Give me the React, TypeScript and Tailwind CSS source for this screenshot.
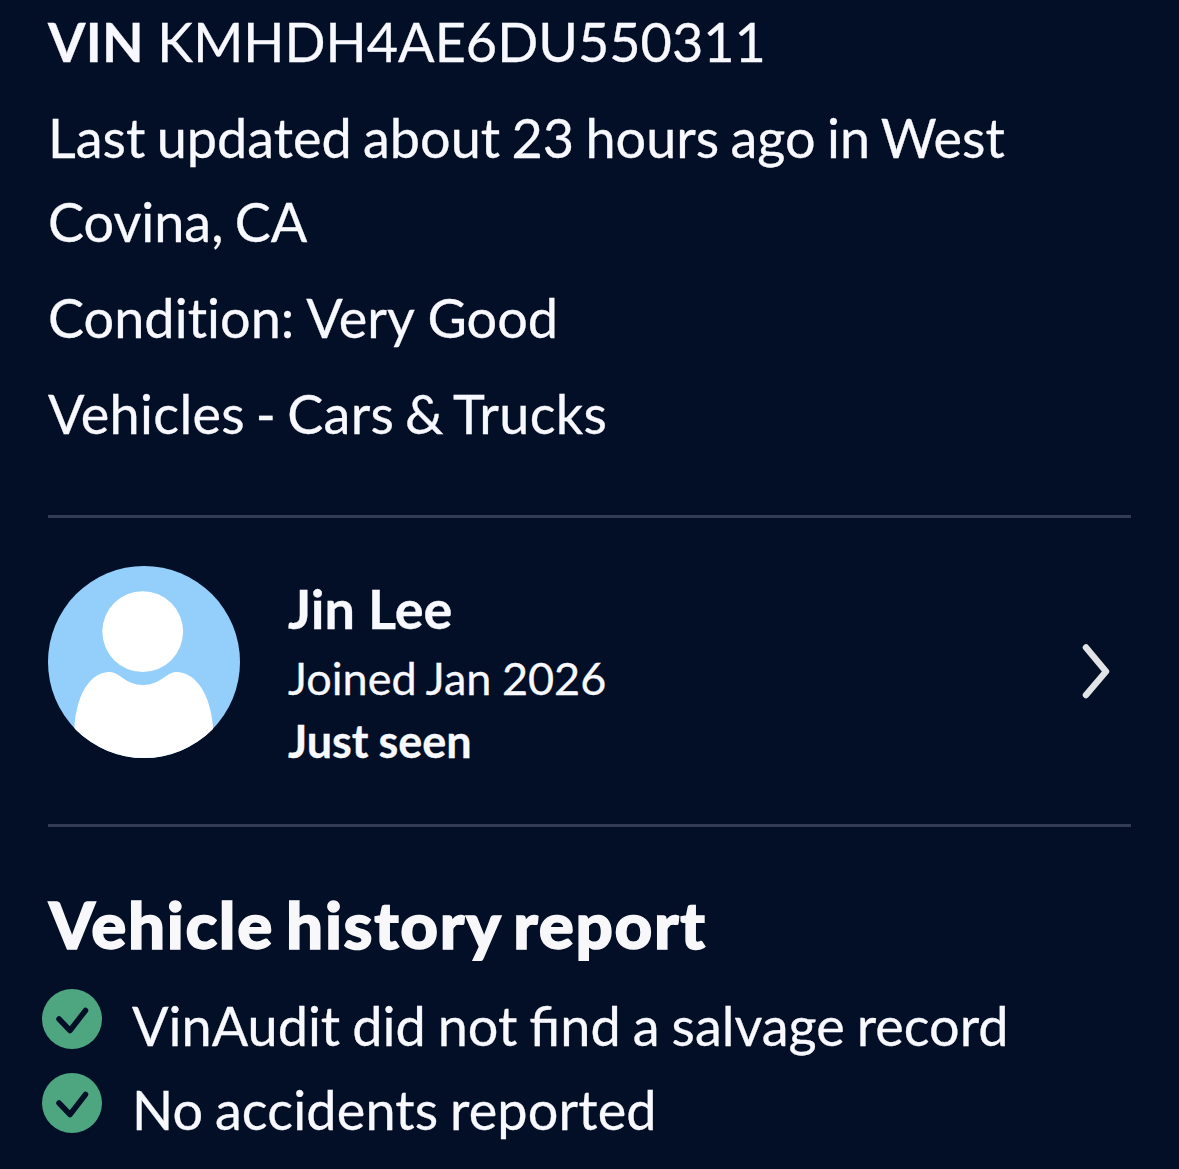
const details = [
  { text: "Condition: Very Good", className: "tracking-[0.03px] [font-variant-ligatures:none]" },
  { text: "Vehicles - Cars & Trucks", className: "tracking-[0.3px] [word-spacing:-3.2px]" },
];

const checks = [
  { text: "VinAudit did not find a salvage record", className: "[word-spacing:-1.8px]" },
  { text: "No accidents reported", className: "tracking-[0.15px] [word-spacing:-2.4px]" },
];

function Avatar() {
  return (
    <svg viewBox="0 0 192 192" className="size-48 shrink-0 rounded-full">
      <rect width="192" height="192" fill="#94cffc" />
      <circle cx="94.7" cy="65.6" r="40.4" fill="#fff" />
      <path
        d="M26.5 192V160C29 128 42 106 62 106C71 106 78 119 95 119C112 119 119 106 128 106C148 106 162 128 165 160V192Z"
        fill="#fff"
      />
    </svg>
  );
}

function CheckBadge() {
  return (
    <svg viewBox="0 0 60 60" className="mt-[5px] size-[60px] shrink-0" fill="none">
      <circle cx="30" cy="30" r="30" fill="#4da680" />
      <path
        d="M17 30L28 41.5L43.5 21.5"
        stroke="#020f26"
        strokeWidth="5.5"
        strokeLinecap="round"
        strokeLinejoin="round"
      />
    </svg>
  );
}

export default function App() {
  return (
    <main className="h-[1169px] overflow-hidden bg-[#020f26] px-12 font-['Lato',sans-serif] text-[54px] leading-[84px] text-[#f8f9ff] [-webkit-text-stroke:0.3px]">
      <section className="flex flex-col gap-3">
        <p className="[word-spacing:-0.5px]">
          <b className="tracking-[0.3px]">VIN</b> KMHDH4AE6DU550311
        </p>
        <p className="[word-spacing:-2.5px]">
          Last updated about 23 hours ago in West
          <br />
          Covina, CA
        </p>
        {details.map(({ text, className }) => (
          <p key={text} className={className}>
            {text}
          </p>
        ))}
      </section>

      <section className="mt-[59px] flex h-[312px] items-start border-y-[3px] border-[#323c54] pt-12">
        <Avatar />
        <div className="ml-12 flex-1">
          <h2 className="mt-px text-[54px] leading-[84px] font-bold">Jin Lee</h2>
          <p className="-mt-1 text-[45px] leading-[63px] [word-spacing:-1px]">Joined Jan 2026</p>
          <p className="text-[45px] leading-[63px] font-bold [word-spacing:-1px]">Just seen</p>
        </div>
        <svg
          viewBox="0 0 30 56"
          className="mt-[77px] mr-[21px] h-14 w-[30px]"
          fill="none"
          stroke="#e2e3e6"
          strokeWidth="6.5"
          strokeLinecap="round"
          strokeLinejoin="round"
        >
          <path d="M6 4.5L26 28.5L6 52" />
        </svg>
      </section>

      <section className="pt-[55px]">
        <h2 className="ml-px text-[65.5px] leading-[84px] font-black tracking-[1.65px] text-[#f8f8fa] [-webkit-text-stroke:1.5px_#f8f8fa] [word-spacing:-5px]">
          Vehicle history report
        </h2>
        <ul className="-ml-1.5 mt-[18px]">
          {checks.map(({ text, className }) => (
            <li key={text} className="flex h-[84px] gap-[30px]">
              <CheckBadge />
              <span className={className}>{text}</span>
            </li>
          ))}
        </ul>
      </section>
    </main>
  );
}
